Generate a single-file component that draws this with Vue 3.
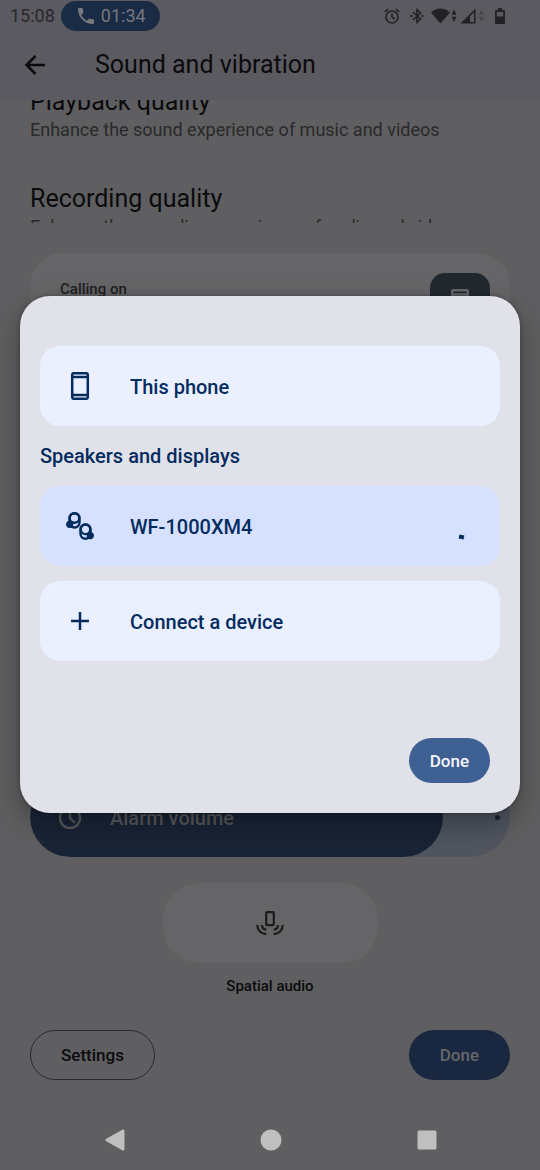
<script setup>
import { ref } from 'vue'

const qualities = [
  { title: 'Playback quality', text: 'Enhance the sound experience of music and videos' },
  { title: 'Recording quality', text: 'Enhance the recording experience of audio and video' },
]
const alarmVolume = ref(86)
</script>

<template>
  <div class="screen">
    <div class="status">
      <span class="time">15:08</span>
      <span class="call">
        <svg width="16" height="16" viewBox="3 3 18 18" fill="currentColor" aria-hidden="true"><path d="M6.6 10.8c1.4 2.8 3.8 5.1 6.6 6.6l2.2-2.2c.3-.3.7-.4 1-.2 1.1.4 2.300.6 3.600.6.6 0 1 .4 1 1V20c0 .6-.4 1-1 1C10.600 21 3 13.400 3 4c0-.6.4-1 1-1h3.500c.6 0 1 .4 1 1 0 1.200.2 2.400.6 3.600.1.400 0 .7-.2 1z" /></svg>
        01:34
      </span>
      <div class="indicators">
        <svg width="16" height="16" viewBox="0 0 16 16" fill="none" stroke="currentColor" stroke-width="1.600" aria-hidden="true"><circle cx="8" cy="9" r="6" /><path d="M8 5.500V9l2.600 2M.8 4 4 1.200M15.200 4 12 1.200" /></svg>
        <svg class="bt" width="14" height="16" viewBox="0 0 14 16" fill="none" stroke="currentColor" stroke-width="1.600" aria-hidden="true"><path d="m3 4 7.500 7L7 14.500v-13L10.500 5 3 12" /><path d="M.5 8h2M11.500 8h2" stroke-width="2" /></svg>
        <svg class="wifi" width="27" height="16" viewBox="0 0 27 16" fill="currentColor" aria-hidden="true"><path d="M0 4.500C5-.8 14-.8 19 4.500L9.500 15.500zM20.500 6.800 23 1.500l2.500 5.300zM20.500 8.800h5L23 14z" /></svg>
        <svg class="signal" width="25" height="16" viewBox="0 0 25 16" aria-hidden="true"><path d="M.5 15.500 15.500.5v15z" fill="currentColor" /><path d="M10 8.300 14 4.200v9.800h-4z" fill="#5b5a60" /><path d="M19 6.800 21.500 1.500 24 6.800zM19 8.800h5L21.500 14z" fill="#47474b" /></svg>
        <svg class="battery" width="10" height="16" viewBox="0 0 10 16" fill="currentColor" aria-hidden="true"><path fill-rule="evenodd" d="M3 0h4v2h2q1 0 1 1v12q0 1-1 1H1q-1 0-1-1V3q0-1 1-1h2zM1.800 4v4.500h6.400V4z" /></svg>
      </div>
    </div>

    <header class="appbar">
      <button class="back" aria-label="Back">
        <svg width="22" height="22" viewBox="0 0 22 22" fill="none" stroke="currentColor" stroke-width="2.500" aria-hidden="true"><path d="M21 11H2.500M11.500 2 2.500 11l9 9" /></svg>
      </button>
      <h1>Sound and vibration</h1>
    </header>

    <div class="viewport">
      <ul class="qualities">
        <li v-for="q in qualities" :key="q.title">
          <h2>{{ q.title }}</h2>
          <p>{{ q.text }}</p>
        </li>
      </ul>
    </div>

    <main class="controls">
      <section class="output">
        <span>Calling on</span>
        <button class="output-button" aria-label="Choose output device">
          <svg width="18" height="28" viewBox="0 0 18 28" fill="none" stroke="currentColor" stroke-width="2.400" aria-hidden="true"><rect x="1.200" y="1.200" width="15.600" height="25.600" rx="1" /><path d="M1 5.500h16M1 22.500h16" /></svg>
        </button>
      </section>

      <div class="slider">
        <div class="fill" :style="{ width: alarmVolume + '%' }"></div>
        <label for="alarm">
          <svg width="24" height="24" viewBox="0 0 24 24" fill="none" stroke="currentColor" stroke-width="2.400" aria-hidden="true"><circle cx="12" cy="12" r="10" /><path d="M12 5v7l5 5" /></svg>
          Alarm volume
        </label>
        <span class="end"></span>
        <input id="alarm" v-model="alarmVolume" type="range" min="0" max="100" />
      </div>
    </main>

    <div class="spatial">
      <button class="spatial-button" aria-labelledby="spatial-label">
        <svg width="28" height="24" viewBox="0 0 28 24" fill="none" stroke="currentColor" stroke-width="2.200" aria-hidden="true"><rect x="10.200" y="1.200" width="7.600" height="13" rx="1" /><path d="M1.300 14c0 5.200 3.900 9 9 9M6 14c0 2.800 1.700 4.500 4.300 4.700M26.700 14c0 5.200-3.900 9-9 9M22 14c0 2.800-1.700 4.500-4.300 4.700" /></svg>
      </button>
      <span id="spatial-label">Spatial audio</span>
    </div>

    <footer class="actions">
      <button class="settings">Settings</button>
      <button class="done-back">Done</button>
    </footer>

    <nav class="sysnav">
      <button aria-label="Back"><svg width="22" height="22" viewBox="0 0 22 22" fill="currentColor" stroke="currentColor" stroke-width="3" stroke-linejoin="round"><path d="M3 11 19 2v18z" /></svg></button>
      <button aria-label="Home"><svg width="22" height="22" viewBox="0 0 22 22" fill="currentColor"><circle cx="11" cy="11" r="10.500" /></svg></button>
      <button aria-label="Recent apps"><svg width="22" height="22" viewBox="0 0 22 22" fill="currentColor"><rect x="1.500" y="1.500" width="19" height="19" rx="1.500" /></svg></button>
    </nav>

    <div class="overlay">
      <div class="dialog" role="dialog" aria-modal="true" aria-label="Output device">
        <button class="device">
          <svg width="28" height="28" viewBox="0 0 28 28" fill="none" stroke="currentColor" stroke-width="2.500" aria-hidden="true"><rect x="6.200" y="1.200" width="15.600" height="25.600" rx="1.500" /><path d="M6 5h16M6 23h16" /></svg>
          <span>This phone</span>
        </button>
        <h3>Speakers and displays</h3>
        <button class="device active">
          <svg width="28" height="28" viewBox="0 0 28 28" fill="none" stroke="currentColor" stroke-width="2.400" aria-hidden="true">
            <rect x="3.500" y="1.200" width="10" height="14.300" rx="5" /><circle cx="8.500" cy="6" r="4.800" />
            <circle cx="3.700" cy="12.300" r="3.600" fill="currentColor" stroke="none" />
            <rect x="14.500" y="12.500" width="10" height="14.300" rx="5" /><circle cx="19.500" cy="17.300" r="4.800" />
            <circle cx="24.300" cy="23.600" r="3.600" fill="currentColor" stroke="none" />
          </svg>
          <span>WF-1000XM4</span>
          <i class="progress"></i>
        </button>
        <button class="device">
          <svg width="28" height="28" viewBox="0 0 28 28" fill="none" stroke="currentColor" stroke-width="2.500" aria-hidden="true"><path d="M14 5v18M5 14h18" /></svg>
          <span>Connect a device</span>
        </button>
        <button class="done">Done</button>
      </div>
    </div>
  </div>
</template>

<style>
body {
  margin: 0;
  background: #5f5f61;
}
</style>

<style scoped>
* {
  box-sizing: border-box;
}
.screen {
  position: relative;
  display: flex;
  flex-direction: column;
  min-height: 100vh;
  font-family: Roboto, "Liberation Sans", sans-serif;
  background: #5f5f61;
  color: #0b0b0d;
}
button {
  margin: 0;
  padding: 0;
  border: 0;
  background: none;
  color: inherit;
  font: inherit;
  cursor: pointer;
}
h1, h2, h3, p, ul {
  margin: 0;
  padding: 0;
  font-weight: 400;
}
svg {
  display: block;
  flex: none;
}
.status {
  display: flex;
  align-items: center;
  height: 31px;
  padding: 0 35px 0 10px;
  background: #5b5a60;
  color: #29292c;
  font-size: 18px;
}
.call {
  display: flex;
  align-items: center;
  gap: 7px;
  height: 30px;
  margin-left: 6px;
  padding: 0 14px 0 17px;
  border-radius: 15px;
  background: #1a2b46;
  color: #77787c;
}
.indicators {
  display: flex;
  align-items: center;
  gap: 8px;
  margin-left: auto;
  color: #222224;
}
.bt {
  margin: 0 -1px 0 2px;
}
.wifi {
  margin-right: -6px;
}
.signal {
  margin-right: 2px;
}
.appbar {
  display: flex;
  align-items: center;
  gap: 49px;
  height: 69px;
  padding: 0 24px 1px;
  background: #5b5a60;
}
.appbar h1 {
  font-size: 25px;
  line-height: 30px;
}
.viewport {
  height: 123px;
  overflow: hidden;
}
.qualities {
  display: flex;
  flex-direction: column;
  gap: 41px;
  margin-top: -13px;
  padding: 0 30px;
  list-style: none;
}
.qualities h2 {
  font-size: 25px;
  line-height: 30px;
}
.qualities p {
  color: #29292b;
  font-size: 18px;
  line-height: 26px;
}
.controls {
  display: flex;
  flex: 1;
  flex-direction: column;
  justify-content: space-between;
  padding: 30px 30px 0;
}
.output {
  display: flex;
  justify-content: space-between;
  height: 120px;
  padding: 20px 20px 0 30px;
  border-radius: 32px;
  background: #656567;
  color: #202022;
  font-size: 15px;
  font-weight: 500;
  line-height: 32px;
}
.output-button {
  display: flex;
  align-items: center;
  justify-content: center;
  width: 60px;
  height: 60px;
  border-radius: 15px;
  background: #22282f;
  color: #66686b;
}
.slider {
  position: relative;
  height: 80px;
  overflow: hidden;
  border-radius: 40px;
  background: #50555f;
}
.fill {
  height: 100%;
  border-radius: 40px;
  background: #192436;
}
.slider label {
  position: absolute;
  inset: 0;
  display: flex;
  align-items: center;
  gap: 28px;
  padding: 2px 0 0 28px;
  color: #57595c;
  font-size: 20px;
  font-weight: 500;
}
.end {
  position: absolute;
  top: 38px;
  right: 10px;
  width: 5px;
  height: 5px;
  border-radius: 50%;
  background: #192436;
}
.slider input {
  position: absolute;
  inset: 0;
  width: 100%;
  height: 100%;
  margin: 0;
  opacity: 0;
}
.spatial {
  display: flex;
  flex-direction: column;
  align-items: center;
  gap: 13px;
  margin-top: 26px;
  font-size: 15px;
  font-weight: 500;
  line-height: 20px;
}
.spatial-button {
  display: flex;
  align-items: center;
  justify-content: center;
  width: 215px;
  height: 80px;
  border-radius: 36px;
  background: #656567;
  color: #1c1c1e;
}
.actions {
  display: flex;
  justify-content: space-between;
  margin: 34px 30px 30px;
  font-size: 17px;
  font-weight: 500;
}
.settings {
  height: 50px;
  padding: 0 30px;
  border: 1px solid #2a2a2c;
  border-radius: 25px;
}
.done-back {
  height: 50px;
  padding: 0 31px;
  border-radius: 25px;
  background: #192740;
  color: #66676a;
}
.sysnav {
  display: flex;
  justify-content: center;
  gap: 96px;
  height: 60px;
  padding-left: 2px;
  color: #bfbfbf;
}
.sysnav button {
  display: flex;
  align-items: center;
  justify-content: center;
  width: 60px;
}
.overlay {
  position: absolute;
  inset: 0 0 61px;
  display: flex;
  align-items: center;
  padding: 0 20px;
}
.dialog {
  display: flex;
  flex: 1;
  flex-direction: column;
  padding: 50px 20px 30px;
  border-radius: 30px;
  background: #e1e1e9;
  color: #042c5f;
  box-shadow: 0 12px 30px rgba(0, 0, 0, 0.3), 0 0 4px rgba(0, 0, 0, 0.3);
  font-size: 20px;
  font-weight: 500;
}
.dialog h3 {
  font-size: 20px;
  font-weight: 500;
  line-height: 60px;
}
.device {
  display: flex;
  align-items: center;
  gap: 36px;
  height: 80px;
  padding: 0 36px 0 26px;
  border-radius: 20px;
  background: #eaf0ff;
}
.device span {
  padding-top: 2px;
}
.device.active {
  margin-bottom: 15px;
  background: #d6e1ff;
}
.progress {
  width: 5px;
  height: 4px;
  margin: 22px 0 0 auto;
  background: currentColor;
  transform: rotate(12deg);
}
.done {
  align-self: flex-end;
  height: 45px;
  margin: 77px 10px 0 0;
  padding: 0 21px;
  border-radius: 23px;
  background: #3e6093;
  color: #f6f7fb;
  font-size: 17px;
}
</style>
